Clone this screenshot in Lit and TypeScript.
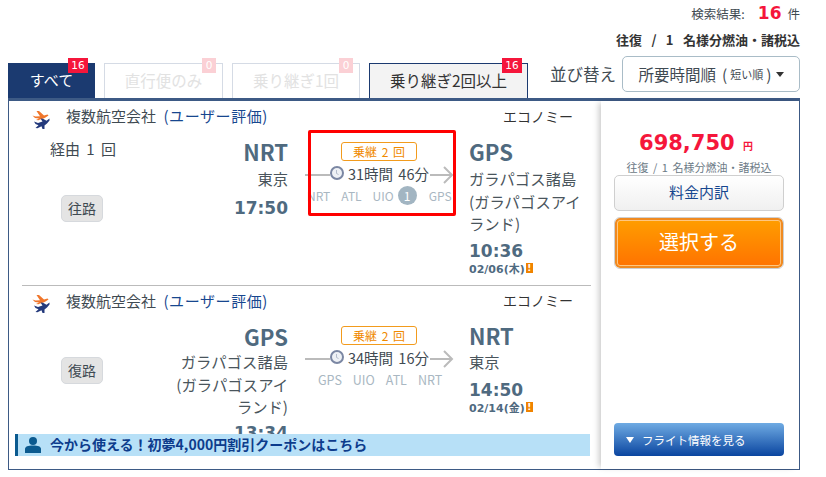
import { LitElement, html, css } from "lit";
import { customElement } from "lit/decorators.js";

const plane = html`<svg class="plane" viewBox="0 0 18 20" width="18" height="20">
  <path fill="#f0762b" d="M0.5 5.5 L3.5 6.5 L8 6.3 L4.5 1 L7 1 L12 5.5 L15.5 4.6 L16.5 5.5 L13.5 7.5 L11.5 8.6 L8 9.6 L6.5 10.3 L4 10 L7 8.4 L3 8 Z"/>
  <path fill="#243a7c" d="M2 11.5 L6 13 L10.5 11.6 L8.5 8.5 L11 8.8 L14.5 10.8 L17.5 8.6 L17.5 10.5 L15 13.5 L12.5 15.4 L12.5 19 L10.5 19 L9.5 16.2 L5.5 18.2 L3.5 18 L6.5 15.2 L3.5 14 Z"/>
</svg>`;

const clock = html`<svg class="clock" viewBox="0 0 14 14" width="14" height="14">
  <circle cx="7" cy="7" r="6" fill="#eef1f5" stroke="#7b87a3" stroke-width="2"/>
  <path d="M6.5 4 V7.5 L8.5 8.5" fill="none" stroke="#b5bdcc" stroke-width="1"/>
</svg>`;

const arrow = html`<svg class="arrow" viewBox="0 0 24 18" width="24" height="18">
  <path d="M0 9 H22 M14 1 L22 9 L14 17" fill="none" stroke="#bbbbbb" stroke-width="2"/>
</svg>`;

@customElement("app-root")
export class AppRoot extends LitElement {
  static styles = css`
    :host {
      display: block;
      width: 826px;
      height: 477px;
      overflow: hidden;
      background: #fff;
      color: #3f4a52;
      font-family: "Noto Sans CJK JP", "Noto Sans", sans-serif;
      font-size: 15px;
    }
    .page { padding: 0 26px 0 8px; }
    .result {
      height: 26px;
      display: flex;
      justify-content: flex-end;
      align-items: center;
      gap: 5px;
      font-size: 12.5px;
    }
    .result b {
      font-family: "DejaVu Sans", sans-serif;
      font-size: 17px;
      color: #f5163b;
      margin: 0 1px 0 8px;
    }
    .tax {
      height: 28px;
      line-height: 28px;
      text-align: right;
      font-size: 13px;
      font-weight: 700;
      color: #333;
      word-spacing: 6.5px;
    }
    .tabrow {
      display: flex;
      align-items: flex-end;
      height: 44px;
    }
    .tab {
      position: relative;
      box-sizing: border-box;
      height: 35px;
      padding-bottom: 3px;
      border: 1px solid #d5dbe5;
      border-bottom: 0;
      margin-right: 9px;
      display: flex;
      align-items: center;
      justify-content: center;
      color: #e2e2e2;
      font-size: 15.5px;
      background: #fff;
    }
    .tab.all { width: 87px; background: #1b3a70; border-color: #1b3a70; color: #fff; font-size: 15px; }
    .tab.direct { width: 119px; }
    .tab.one { width: 128px; }
    .tab.two { width: 159px; background: #f3f3f3; border-color: #1b3a70; color: #333; }
    .count {
      position: absolute;
      top: -6px;
      right: 5px;
      height: 15px;
      min-width: 14px;
      padding: 0 3px;
      box-sizing: border-box;
      background: #f5163b;
      color: #fff;
      font-family: "DejaVu Sans", sans-serif;
      font-size: 10.5px;
      line-height: 15px;
      text-align: center;
    }
    .tab.direct .count, .tab.one .count { background: #fbd0d5; right: 6px; }
    .tab.all .count { right: 6px; min-width: 20px; }
    .tab.two .count { min-width: 20px; }
    .sort {
      margin-left: auto;
      display: flex;
      align-items: center;
      gap: 6px;
      align-self: flex-start;
      margin-top: 2px;
      font-size: 16.5px;
    }
    .select {
      box-sizing: border-box;
      width: 178px;
      height: 36px;
      border: 1px solid #a9bcc7;
      border-radius: 5px;
      display: flex;
      align-items: center;
      justify-content: center;
      font-size: 15.5px;
      white-space: nowrap;
    }
    .select small { font-size: 11px; margin: 0 3px; }
    .paren { margin-left: 6px; }
    .caret {
      width: 0;
      height: 0;
      border: 4px solid transparent;
      border-top: 5px solid #333;
      border-bottom: 0;
      margin-left: 4px;
    }
    .panel {
      position: relative;
      box-sizing: border-box;
      height: 372px;
      border: 1px solid #3d5a85;
      border-top: 3px solid #3d5a85;
      display: flex;
    }
    .legs {
      box-sizing: border-box;
      width: 592px;
      height: 368px;
      overflow: hidden;
      padding: 0 10px 0 13px;
    }
    .leg { height: 184px; box-sizing: border-box; }
    .leg + .leg { border-top: 1px solid #bbb; height: 200px; }
    .head {
      display: flex;
      align-items: center;
      height: 29px;
      padding-left: 10px;
    }
    .leg.back .head { height: 28px; }
    .plane { margin-top: 8px; }
    .airline { margin-left: 16px; font-size: 15px; white-space: nowrap; word-spacing: 4px; }
    .airline span { color: #17478f; letter-spacing: 0.6px; }
    .class { margin-left: auto; font-size: 14px; color: #333; padding-right: 18px; }
    .body { display: flex; position: relative; }
    .side { width: 96px; flex: none; }
    .via {
      margin: 7px 0 0 28px;
      height: 58px;
      line-height: 24px;
      font-size: 15px;
      white-space: nowrap;
      word-spacing: 3px;
    }
    .pill {
      display: block;
      width: 42px;
      height: 27px;
      margin-left: 39px;
      box-sizing: border-box;
      background: #e4e4e4;
      border: 1px solid #d6d9dd;
      border-radius: 5px;
      text-align: center;
      line-height: 25px;
      font-size: 14px;
    }
    .leg.back .side { padding-top: 43px; }
    .from { width: 170px; text-align: right; flex: none; box-sizing: border-box; }
    .leg.back .from { padding-left: 54px; }
    .to { width: 116px; flex: none; margin-left: 13px; }
    .code {
      display: block;
      font-size: 22px;
      font-weight: 700;
      color: #4f6a7f;
      line-height: 30px;
      margin-top: 6px;
    }
    .leg.back .from .code { margin-top: 7px; }
    .city { line-height: 22.5px; margin-top: 1px; color: #4a555c; font-size: 15.3px; }
    .leg.back .from .city { margin-top: -1px; }
    .leg.back .to .city { margin-top: 0; }
    .time {
      display: block;
      font-family: "DejaVu Sans", sans-serif;
      font-size: 17px;
      font-weight: 700;
      color: #4f6a7f;
      line-height: 24px;
      margin-top: 4px;
    }
    .from .time { margin-top: 6px; }
    .leg.back .from .time { margin-top: 3px; }
    .leg.back .to .time { margin-top: 5px; }
    .date {
      display: flex;
      align-items: center;
      gap: 1px;
      font-family: "DejaVu Sans", "Noto Sans CJK JP", sans-serif;
      font-size: 11px;
      font-weight: 700;
      color: #4f6a7f;
      line-height: 10px;
      margin-top: 2px;
    }
    .warn {
      width: 7px;
      height: 10px;
      margin-top: -4px;
      background: #f08300;
      color: #fff;
      font-size: 9px;
      line-height: 10px;
      text-align: center;
    }
    .route {
      position: relative;
      width: 148px;
      margin-left: 20px;
      flex: none;
      box-sizing: border-box;
      padding-top: 12px;
      height: 86px;
    }
    .badge {
      display: block;
      box-sizing: border-box;
      width: 76px;
      height: 19px;
      margin-left: 33px;
      border: 1px solid #f29b1d;
      border-radius: 3px;
      color: #f08a00;
      font-size: 12px;
      line-height: 17px;
      text-align: center;
      word-spacing: 2px;
    }
    .line {
      display: flex;
      align-items: center;
      height: 22px;
      margin-top: 1px;
      margin-left: -3px;
      font-size: 14.5px;
      white-space: nowrap;
      word-spacing: 2px;
    }
    .line i { display: block; width: 25px; height: 2px; background: #bbb; margin-top: 4px; }
    .line .clock { margin-right: 4px; }
    .line .arrow { margin: 4px 0 0 1px; }
    .stops {
      display: flex;
      align-items: center;
      height: 20px;
      margin-top: 1px;
      font-size: 12px;
      color: #a9b7c2;
      white-space: nowrap;
    }
    .stops.out { gap: 11px; margin-left: -1px; }
    .stops.out span:last-child { margin-left: 1px; }
    .stops.in { gap: 11px; margin-left: 10px; font-size: 12.5px; }
    .num {
      width: 19px;
      height: 19px;
      border-radius: 50%;
      background: #a2b5c2;
      color: #fff;
      text-align: center;
      line-height: 19px;
      margin-left: -7px;
    }
    .mark {
      position: absolute;
      inset: 0;
      box-sizing: border-box;
      border: 3px solid #f00;
      border-radius: 2px;
    }
    .banner {
      position: absolute;
      left: 6px;
      top: 333px;
      width: 575px;
      height: 22px;
      box-sizing: border-box;
      background: #b7e0f7;
      border-left: 3px solid #0b5a8f;
      display: flex;
      align-items: center;
      gap: 8px;
      padding: 0 0 2px 6px;
      color: #0d3c8c;
      font-size: 14px;
      font-weight: 700;
      white-space: nowrap;
    }
    .banner svg { margin-top: 2px; }
    .side-r {
      position: relative;
      box-sizing: border-box;
      flex: 1;
      background: #fff;
      box-shadow: -4px 0 6px -2px rgba(0, 0, 0, 0.22);
      padding: 28px 15px 13px 13px;
      display: flex;
      flex-direction: column;
      align-items: stretch;
    }
    .price {
      text-align: center;
      font-family: "DejaVu Sans", sans-serif;
      font-weight: 700;
      font-size: 21px;
      line-height: 28px;
      color: #f5163b;
      padding-right: 6px;
    }
    .price small {
      font-family: "Noto Sans CJK JP", sans-serif;
      font-size: 10px;
      line-height: 1;
      margin-left: 1px;
    }
    .note {
      text-align: center;
      font-size: 11px;
      line-height: 16px;
      color: #6c7a86;
      white-space: nowrap;
      margin-top: 2px;
      word-spacing: 2px;
    }
    .detail {
      box-sizing: border-box;
      height: 36px;
      border: 1px solid #cfcfcf;
      border-radius: 5px;
      background: linear-gradient(#fff, #f0f0f0);
      color: #17478f;
      text-align: center;
      line-height: 31px;
      font-size: 15px;
    }
    .choose {
      box-sizing: border-box;
      height: 50px;
      margin: 7px 1px 0;
      border: 2px solid #f08a20;
      outline: 1px solid #cfcfcf;
      box-shadow: inset 0 0 0 1px #ffc680;
      border-radius: 5px;
      background: linear-gradient(#ff9d00, #ff7300);
      color: #fff;
      text-align: center;
      line-height: 44px;
      font-size: 20px;
    }
    .info {
      box-sizing: border-box;
      height: 33px;
      margin-top: auto;
      border-radius: 4px;
      background: linear-gradient(#6fabe3, #0a45a0);
      color: #fff;
      display: flex;
      align-items: center;
      gap: 8px;
      padding-left: 12px;
      font-size: 11.5px;
    }
    .tri {
      width: 0;
      height: 0;
      border: 4px solid transparent;
      border-top: 6px solid #fff;
      border-bottom: 0;
    }
  `;

  render() {
    return html`<div class="page">
      <div class="result">検索結果: <b>16</b> 件</div>
      <div class="tax">往復 / 1 名様分燃油・諸税込</div>
      <div class="tabrow">
        <div class="tab all">すべて<span class="count">16</span></div>
        <div class="tab direct">直行便のみ<span class="count">0</span></div>
        <div class="tab one">乗り継ぎ1回<span class="count">0</span></div>
        <div class="tab two">乗り継ぎ2回以上<span class="count">16</span></div>
        <div class="sort">並び替え
          <div class="select">所要時間順<span class="paren">(</span><small>短い順</small>)<span class="caret"></span></div>
        </div>
      </div>
      <div class="panel">
        <div class="legs">
          <div class="leg">
            <div class="head">${plane}<div class="airline">複数航空会社 <span>(ユーザー評価)</span></div><div class="class">エコノミー</div></div>
            <div class="body">
              <div class="side"><div class="via">経由 1 回</div><span class="pill">往路</span></div>
              <div class="from"><span class="code">NRT</span><div class="city">東京</div><span class="time">17:50</span></div>
              <div class="route">
                <span class="badge">乗継 2 回</span>
                <div class="line"><i></i>${clock}31時間 46分${arrow}</div>
                <div class="stops out"><span>NRT</span><span>ATL</span><span>UIO</span><span class="num">1</span><span>GPS</span></div>
                <div class="mark"></div>
              </div>
              <div class="to"><span class="code">GPS</span><div class="city">ガラパゴス諸島 (ガラパゴスアイランド)</div><span class="time">10:36</span><div class="date">02/06(木)<span class="warn">!</span></div></div>
            </div>
          </div>
          <div class="leg back">
            <div class="head">${plane}<div class="airline">複数航空会社 <span>(ユーザー評価)</span></div><div class="class">エコノミー</div></div>
            <div class="body">
              <div class="side"><span class="pill">復路</span></div>
              <div class="from"><span class="code">GPS</span><div class="city">ガラパゴス諸島 (ガラパゴスアイランド)</div><span class="time">13:34</span></div>
              <div class="route">
                <span class="badge">乗継 2 回</span>
                <div class="line"><i></i>${clock}34時間 16分${arrow}</div>
                <div class="stops in"><span>GPS</span><span>UIO</span><span>ATL</span><span>NRT</span></div>
              </div>
              <div class="to"><span class="code">NRT</span><div class="city">東京</div><span class="time">14:50</span><div class="date">02/14(金)<span class="warn">!</span></div></div>
            </div>
          </div>
        </div>
        <div class="side-r">
          <div class="price">698,750 <small>円</small></div>
          <div class="note">往復 / 1 名様分燃油・諸税込</div>
          <div class="detail">料金内訳</div>
          <div class="choose">選択する</div>
          <div class="info"><span class="tri"></span>フライト情報を見る</div>
        </div>
        <div class="banner">
          <svg viewBox="0 0 18 18" width="18" height="18"><circle cx="9" cy="5" r="4" fill="#0b5a8f"/><path d="M1 17 V13 C1 10.5 4 9.5 9 9.5 S17 10.5 17 13 V17 Z" fill="#0b5a8f"/></svg>
          今から使える！初夢4,000円割引クーポンはこちら
        </div>
      </div>
    </div>`;
  }
}
